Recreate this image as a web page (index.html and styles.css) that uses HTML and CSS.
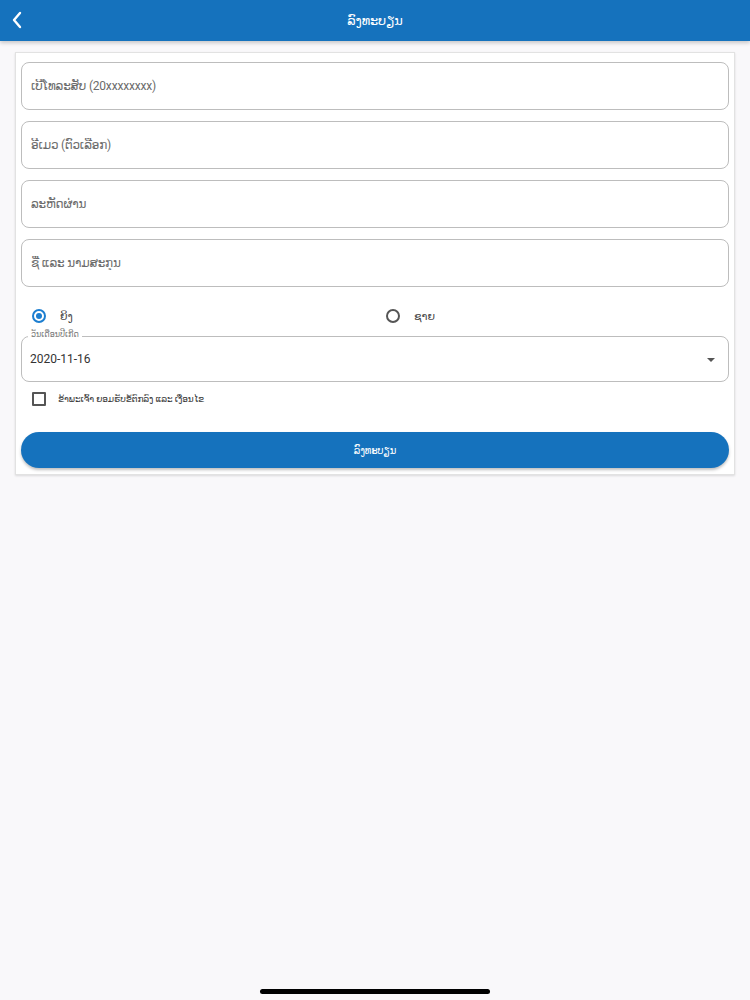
FILE: index.html
```html
<!DOCTYPE html>
<html lang="lo">
<head>
    <meta charset="UTF-8">
    <title>ລົງທະບຽນ</title>
    <link rel="stylesheet" href="styles.css">
</head>
<body>

    <header class="topbar">
        <button class="back" aria-label="back">
            <svg width="12" height="18" viewBox="0 0 12 18"><path d="M9 2 L3 9 L9 16" fill="none" stroke="#fff" stroke-width="2.4" stroke-linecap="round" stroke-linejoin="round"/></svg>
        </button>
        <h1>ລົງທະບຽນ</h1>
    </header>

    <main class="card">
        <div class="field"><input type="text" placeholder="ເບີໂທລະສັບ (20xxxxxxxx)"></div>
        <div class="field"><input type="text" placeholder="ອີເມວ (ຕົວເລືອກ)"></div>
        <div class="field"><input type="password" placeholder="ລະຫັດຜ່ານ"></div>
        <div class="field"><input type="text" placeholder="ຊື່ ແລະ ນາມສະກຸນ"></div>

        <div class="gender">
            <label class="radio"><span class="dot checked"></span>ຍິງ</label>
            <label class="radio"><span class="dot"></span>ຊາຍ</label>
        </div>

        <div class="field select">
            <span class="legend">ວັນເດືອນປີເກີດ</span>
            <span class="value">2020-11-16</span>
            <span class="caret"></span>
        </div>

        <label class="agree"><span class="box"></span>ຂ້າພະເຈົ້າ ຍອມຮັບຂໍ້ຕົກລົງ ແລະ ເງື່ອນໄຂ</label>

        <button class="submit">ລົງທະບຽນ</button>
    </main>

    <div class="home-bar"></div>
</body>
</html>
```

FILE: styles.css
```css
body {
    font-family: Roboto, "DejaVu Sans", sans-serif;
    background-color: #f9f8fa;
    color: #333;
    margin: 0;
    height: 1000px;
    position: relative;
}

.topbar {
    height: 41px;
    background: #1572bd;
    display: flex;
    align-items: center;
    justify-content: center;
    position: relative;
    box-shadow: 0 2px 4px rgba(0,0,0,0.2);
}

.topbar h1 {
    margin: 0;
    font-size: 13px;
    font-weight: normal;
    color: #fff;
    letter-spacing: -0.2px;
}

.back {
    position: absolute;
    left: 8px;
    top: 11px;
    background: none;
    border: none;
    padding: 0;
    width: 18px;
    height: 20px;
}

.card {
    margin: 11px 15px 0;
    background: #fff;
    border: 1px solid #e2e2e2;
    box-shadow: 0 1px 2px rgba(0,0,0,0.12);
    padding: 9px 5px 6px;
    display: flex;
    flex-direction: column;
}

.field {
    height: 46px;
    border: 1px solid #bdbdbd;
    border-radius: 8px;
    margin-bottom: 11px;
    display: flex;
    align-items: center;
    position: relative;
}

.field input {
    border: none;
    outline: none;
    background: transparent;
    width: 100%;
    padding: 0 9px;
    font-family: inherit;
    font-size: 12px;
    letter-spacing: -0.2px;
    color: #333;
}

.field input::placeholder {
    color: #6b6b6b;
}

.gender {
    display: flex;
    height: 36px;
    align-items: center;
    margin-bottom: 2px;
}

.radio {
    flex: 1;
    display: flex;
    align-items: center;
    font-size: 11px;
    color: #444;
    padding-left: 11px;
}

.dot {
    width: 10px;
    height: 10px;
    border: 2px solid #555;
    border-radius: 50%;
    margin-right: 14px;
    box-sizing: content-box;
    position: relative;
}

.dot.checked {
    border-color: #1c7ed0;
}

.dot.checked::after {
    content: "";
    position: absolute;
    left: 2px;
    top: 2px;
    width: 6px;
    height: 6px;
    border-radius: 50%;
    background: #1c7ed0;
}

.select {
    height: 44px;
    margin-bottom: 5px;
}

.legend {
    position: absolute;
    left: 6px;
    top: -7px;
    background: #fff;
    padding: 0 3px;
    font-size: 8px;
    color: #777;
}

.value {
    padding-left: 8px;
    font-size: 12px;
    color: #333;
}

.caret {
    position: absolute;
    right: 13px;
    top: 21px;
    border-left: 4px solid transparent;
    border-right: 4px solid transparent;
    border-top: 4px solid #555;
}

.agree {
    display: flex;
    align-items: center;
    height: 24px;
    font-size: 9px;
    letter-spacing: -0.1px;
    color: #333;
    padding-left: 11px;
}

.box {
    width: 10px;
    height: 10px;
    border: 2px solid #555;
    border-radius: 1px;
    margin-right: 12px;
}

.submit {
    margin-top: 21px;
    height: 36px;
    border: none;
    border-radius: 18px;
    background: #1572bd;
    color: #fff;
    font-family: inherit;
    font-size: 10px;
    letter-spacing: -0.2px;
    box-shadow: 0 2px 3px rgba(0,0,0,0.25);
}

.home-bar {
    position: absolute;
    left: 260px;
    bottom: 6px;
    width: 230px;
    height: 5px;
    border-radius: 3px;
    background: #000;
}
```
